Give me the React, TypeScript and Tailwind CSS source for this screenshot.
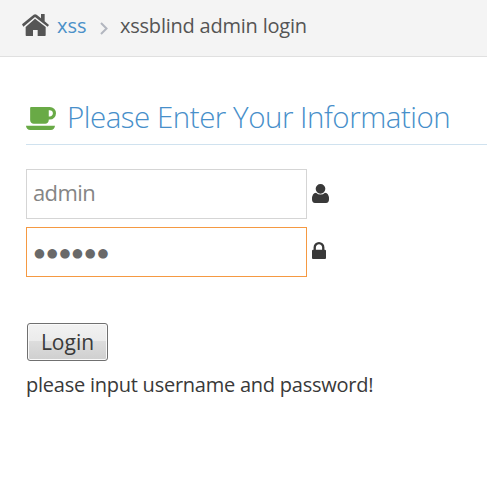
const HOME =
  'M0 31L35 2Q39-1 44 2L57 13V0H68V22L81 33L77 38L39 9L4 38ZM39 14L71 39V64Q71 66 69 66H47V48H33V66H13Q11 66 11 64V39Z';
const COFFEE =
  'M1664 640q0-80-56-136t-136-56h-64v384h64q80 0 136-56t56-136zm-1664 768h1792q0 106-75 181t-181 75h-1280q-106 0-181-75t-75-181zm1856-768q0 159-112.5 271.5t-271.5 112.5h-64v32q0 92-66 158t-158 66h-704q-92 0-158-66t-66-158v-736q0-26 19-45t45-19h1152q159 0 271.5 112.5t112.5 271.5z';
const USER =
  'M25.5 0A14.5 14.5 0 1 1 25.5 29A14.5 14.5 0 1 1 25.5 0ZM12 26Q18 31.5 25.5 31.5T39 26Q51 26 51 46Q51 57 42 57H9Q0 57 0 46Q0 26 12 26Z';
const LOCK =
  'M640 768h512v-192q0-106-75-181t-181-75-181 75-75 181v192zm832 96v576q0 40-28 68t-68 28h-960q-40 0-68-28t-28-68v-576q0-40 28-68t68-28h32v-192q0-184 132-316t316-132 316 132 132 316v192h32q40 0 68 28t28 68z';

function Icon({ d, box, className }: { d: string; box: string; className: string }) {
  return (
    <svg viewBox={box} preserveAspectRatio="none" fill="currentColor" className={`shrink-0 ${className}`}>
      <path d={d} />
    </svg>
  );
}

export default function App() {
  return (
    <div className="h-[504px] w-full overflow-hidden bg-white font-['Open_Sans',sans-serif] text-[#393939]">
      <nav className="flex h-[57px] items-start border-b border-[#e0e0e0] bg-[#f4f4f4] pl-[22px] text-xl leading-7 text-[#555]">
        <Icon d={HOME} box="0 0 81 66" className="mt-[14px] h-[22px] w-[27px]" />
        <a className="mt-3 ml-2 w-[43px] whitespace-nowrap text-[#4a90c8]">xss</a>
        <svg viewBox="0 0 8 13" className="mt-[22px] h-[13px] w-2 fill-none stroke-[#b2b6bf] stroke-2">
          <path d="M1 1l5.5 5.5L1 12" />
        </svg>
        <span className="mt-3 ml-3 tracking-[-0.22px] whitespace-nowrap">xssblind admin login</span>
      </nav>
      <main className="pl-[26px]">
        <h4 className="flex h-[88px] items-start border-b border-[#d0e2ef] text-[29.5px] leading-10 font-light text-[#478fca]">
          <Icon d={COFFEE} box="0 256 1856 1408" className="mt-[50px] h-[23px] w-[30px] text-[#69aa46]" />
          <span className="mt-10 ml-[11px] tracking-[-0.48px] whitespace-nowrap">Please Enter Your Information</span>
        </h4>
        <form className="pt-6">
          <div className="flex h-[50px]">
            <div className="flex w-[281px] items-center border border-[#d5d5d5] pb-[3px] pl-1.5 text-[22px] tracking-[-0.6px] text-[#858585]">
              admin
            </div>
            <Icon d={USER} box="0 0 51 57" className="mt-[15px] ml-[5px] h-[19px] w-[17px]" />
          </div>
          <div className="mt-2 flex h-[50px]">
            <div className="flex w-[281px] items-center border border-[#f59942] pt-0.5 pl-[7px] font-['DejaVu_Sans',sans-serif] text-[12.5px] tracking-[1.8px] text-[#696969]">
              ●●●●●●
            </div>
            <Icon d={LOCK} box="320 128 1152 1408" className="mt-[15px] ml-[5px] h-[17px] w-[14px]" />
          </div>
          <button
            type="button"
            className="mt-[46px] ml-px flex h-[38px] w-[81px] items-center justify-center rounded-[3px] border border-[#707070] bg-[linear-gradient(#f2f2f2,#ebebeb_48%,#dddddd_48%,#cfcfcf)] pt-px text-[21px] shadow-[inset_0_0_0_1px_#fafafa]"
          >
            Login
          </button>
          <p className="mt-[10px] text-xl leading-7 tracking-[-0.24px] whitespace-nowrap">please input username and password!</p>
        </form>
      </main>
    </div>
  );
}
